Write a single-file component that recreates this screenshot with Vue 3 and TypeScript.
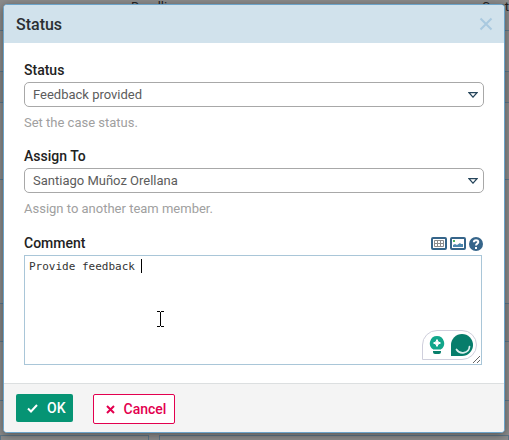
<script setup lang="ts">
import { ref, onMounted } from 'vue'

const status = ref('Feedback provided')
const assignee = ref('Santiago Muñoz Orellana')
const comment = ref('Provide feedback ')
const statuses: string[] = ['Feedback provided', 'Open', 'Closed']
const people: string[] = ['Santiago Muñoz Orellana']
const box = ref<HTMLTextAreaElement | null>(null)

onMounted(() => {
  box.value?.focus()
  box.value?.setSelectionRange(comment.value.length, comment.value.length)
})
</script>

<template>
  <div class="page">
    <div class="behind" aria-hidden="true">
      <div class="heads"><span>Deadline</span><span>Cont</span></div>
      <div class="row r0"></div>
      <div class="row r1"></div>
      <div class="row r2"></div>
      <div class="row r3"></div>
      <div class="row r4"></div>
      <div class="row r5"></div>
      <div class="row r6"></div>
      <div class="cards"><i></i><i></i></div>
    </div>

    <form class="dialog" role="dialog" aria-labelledby="dlg-title" @submit.prevent>
      <header>
        <h1 id="dlg-title">Status</h1>
        <button type="button" class="close" aria-label="Close">
          <svg width="14" height="14" viewBox="0 0 14 14"><path d="M1.5 1.5 12.5 12.5M12.5 1.5 1.5 12.5" /></svg>
        </button>
      </header>

      <main>
        <div class="field">
          <label for="status">Status</label>
          <div class="select">
            <select id="status" v-model="status"><option v-for="s in statuses" :key="s">{{ s }}</option></select>
            <svg width="10" height="6" viewBox="0 0 10 6"><path d="M1 .7h8L5 5.200z" /></svg>
          </div>
          <p>Set the case status.</p>
        </div>
        <div class="field">
          <label for="assign">Assign To</label>
          <div class="select">
            <select id="assign" v-model="assignee"><option v-for="p in people" :key="p">{{ p }}</option></select>
            <svg width="10" height="6" viewBox="0 0 10 6"><path d="M1 .7h8L5 5.200z" /></svg>
          </div>
          <p>Assign to another team member.</p>
        </div>
        <div class="field">
          <div class="bar">
            <label for="comment">Comment</label>
            <div class="tools">
              <button type="button" aria-label="Insert table">
                <svg width="16" height="13" viewBox="0 0 16 13">
                  <rect x="1" y="1" width="14" height="11" rx="1" fill="#fff" stroke="#36658a" stroke-width="2" />
                  <path d="M3.500 3.500h9v6h-9zM6.500 3.500v6M9.500 3.500v6M3.500 6.500h9" fill="none" stroke="#8c8c8c" />
                </svg>
              </button>
              <button type="button" aria-label="Insert image">
                <svg width="16" height="13" viewBox="0 0 16 13">
                  <rect x="1" y="1" width="14" height="11" rx="1" fill="#fff" stroke="#36658a" stroke-width="2" />
                  <rect x="3" y="3" width="2" height="2" fill="#4fb563" />
                  <path d="M3 10V8l2-1 2 1 3-2 1 1 2 0v3z" fill="#4c88b0" />
                </svg>
              </button>
              <button type="button" aria-label="Help">
                <svg width="14" height="14" viewBox="0 0 14 14">
                  <circle cx="7" cy="7" r="7" fill="#36658a" />
                  <path d="M4.800 5.200C4.900 2.600 9.300 2.500 9.300 5.100 9.300 6.700 7 6.600 7 8.500" fill="none" stroke="#fff" stroke-width="2" />
                  <rect x="6" y="10" width="2" height="2" fill="#fff" />
                </svg>
              </button>
            </div>
          </div>
          <div class="editor">
            <textarea id="comment" ref="box" v-model="comment" spellcheck="false"></textarea>
            <span class="caret" aria-hidden="true"></span>
            <div class="assistant">
              <svg width="16" height="20" viewBox="0 0 16 20">
                <path d="M8 1a7.300 7.300 0 0 0-4 13.300V15h8v-.7A7.300 7.300 0 0 0 8 1z" fill="#12a68a" />
                <path d="M8 4.500q.5 3 3.500 3.500-3 .5-3.500 3.500-.5-3-3.500-3.500 3-.5 3.500-3.500z" fill="#fff" stroke="#fff" />
                <path d="M3 14.500h10v1.500H3z" fill="#fff" />
                <path d="M4 16h8v1q0 2-2 2H6q-2 0-2-2z" fill="#087f6b" />
              </svg>
              <svg width="22" height="22" viewBox="0 0 22 22">
                <path d="M0 22V11a11 11 0 1 1 11 11z" fill="#067d6b" />
                <path d="M5.500 15.500C9 21 18 19.500 18.500 12.500" fill="none" stroke="#dcefed" stroke-width="1.700" stroke-linecap="round" />
              </svg>
            </div>
            <span class="pointer" aria-hidden="true">
              <svg width="7" height="16" viewBox="0 0 7 16"><path d="M0 .5h3M4 .5h3M3.500 1v14M0 15.500h3M4 15.500h3" /></svg>
            </span>
          </div>
        </div>
      </main>

      <footer>
        <button type="submit" class="ok">
          <svg width="11" height="9" viewBox="0 0 11 9"><path d="M1 4.500 4 7.500 10 1" /></svg>OK
        </button>
        <button type="button" class="cancel">
          <svg width="9" height="9" viewBox="0 0 9 9"><path d="M1 1 8 8M8 1 1 8" /></svg>Cancel
        </button>
      </footer>
    </form>
  </div>
</template>

<style>
body { background: #8b8b8b; }
</style>

<style scoped>
* { box-sizing: border-box; }
.page { position: relative; min-height: 100vh; overflow: hidden; padding: 4px 4px 7px 3px; font-family: Roboto, "Liberation Sans", sans-serif; font-size: 14px; color: #222; }
.behind { position: absolute; inset: 0; display: flex; flex-direction: column; }
.heads { display: flex; justify-content: space-between; height: 30px; padding-left: 131px; font-size: 13px; line-height: 14px; }
.row { border-top: 1px solid #5d7688; }
.r0 { height: 41px; }
.r1 { height: 31px; background: #858585; }
.r2 { height: 77px; }
.r3 { height: 124px; }
.r4 { height: 38px; background: #858585; }
.r5 { height: 59px; }
.r6 { height: 35px; }
.cards { display: flex; gap: 10px; flex: 1; }
.cards i { flex: 1; border: 1px solid #5d7688; border-bottom: 0; }
.cards i:first-child { flex: 0 0 149px; }
.dialog { position: relative; background: #fff; border: 1px solid #6ba3c9; border-radius: 4px; box-shadow: 0 2px 8px rgba(0, 0, 0, .4); overflow: hidden; }
header { display: flex; align-items: center; justify-content: space-between; height: 38px; padding: 0 11px 0 12px; background: #d1e2ec; }
h1 { margin: 0; font-size: 16px; font-weight: 500; color: #2b2f33; }
button { font-family: inherit; cursor: pointer; }
.close, .tools button { display: flex; padding: 0; border: 0; background: none; }
.close svg { stroke: #a9c9df; stroke-width: 2; fill: none; }
main { display: flex; flex-direction: column; gap: 16px; padding: 18px 20px; }
.field { display: flex; flex-direction: column; }
label { height: 21px; line-height: 18px; font-weight: 500; }
.select { position: relative; display: flex; }
select { flex: 1; height: 25px; appearance: none; padding: 0 8px; border: 1px solid #a8a8a8; border-radius: 5px; background: #fff; color: #5c5c5c; font: 13px/20px Roboto, sans-serif; }
.select svg { position: absolute; right: 6px; top: 10px; fill: #fff; stroke: #27465c; stroke-width: 1.200; pointer-events: none; }
p { margin: 8px 0 0; font-size: 13px; line-height: 16px; color: #a0a0a0; }
.bar { display: flex; justify-content: space-between; padding: 1px 1px 0 0; }
.tools { display: flex; gap: 3px; align-items: center; height: 19px; }
.editor { position: relative; display: flex; margin-right: 2px; }
textarea { flex: 1; height: 110px; padding: 4px; border: 1px solid #a9c6d8; outline: none; background: #fff; color: #333; caret-color: transparent; font: 11px/14px "DejaVu Sans Mono", monospace; }
.caret { position: absolute; left: 117px; top: 4px; width: 1px; height: 14px; background: #000; pointer-events: none; }
.assistant { position: absolute; right: 5px; bottom: 5px; display: flex; align-items: center; gap: 6px; height: 30px; padding: 0 3px 0 6px; border: 1px solid #cfcfdc; border-radius: 15px 15px 15px 0; background: #fff; }
.pointer { position: absolute; left: 133px; top: 56px; display: flex; pointer-events: none; }
.pointer path { stroke: #000; fill: none; }
footer { display: flex; align-items: flex-start; gap: 20px; padding: 10px 12px 8px; border-top: 1px solid #dcdfe0; background: #f4f4f4; }
footer button { display: flex; align-items: center; gap: 9px; height: 28px; border-radius: 2px; font-size: 14px; font-weight: 500; }
footer svg { fill: none; stroke: currentColor; stroke-width: 2; }
.ok { border: 0; padding: 0 7px 0 11px; background: #069474; color: #fff; }
.cancel { height: 30px; padding: 0 8px 0 12px; border: 1px solid #e3004f; background: #fff; color: #e3004f; }
</style>
